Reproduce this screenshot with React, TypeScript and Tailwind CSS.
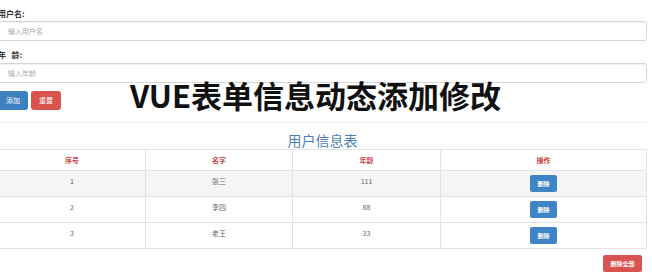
const users = [
  { id: 1, name: "张三", age: 111 },
  { id: 2, name: "李四", age: 88 },
  { id: 3, name: "老王", age: 33 },
];

export default function App() {
  return (
    <div className="relative h-[275px] w-[652px] overflow-hidden bg-white font-['Noto_Sans_CJK_SC',sans-serif] text-[#333]">
      <div className="ml-[-2px] w-[649px] pt-[9px]">
        <label className="block h-[9px] text-[8px] font-bold leading-[9px]">用户名:</label>
        <input
          className="mt-[3px] block h-[20px] w-full rounded-[3px] border border-[#d6d6d6] px-[9px] text-[7px] shadow-[inset_0_1px_1px_rgba(0,0,0,0.06)] outline-none placeholder:text-[#aaa]"
          placeholder="输入用户名"
        />
        <label className="mt-[9px] block h-[9px] text-[8px] font-bold leading-[9px]">年&nbsp;&nbsp;&nbsp;龄:</label>
        <input
          className="mt-[4px] block h-[20px] w-full rounded-[3px] border border-[#d6d6d6] px-[9px] text-[7px] shadow-[inset_0_1px_1px_rgba(0,0,0,0.06)] outline-none placeholder:text-[#aaa]"
          placeholder="输入年龄"
        />
        <div className="mt-[8px] flex gap-[3px]">
          <button className="h-[19px] w-[30px] rounded-[3px] bg-[#3e7fbf] text-[7px] text-white">添加</button>
          <button className="h-[19px] w-[30px] rounded-[3px] bg-[#d9534f] text-[7px] text-white">重置</button>
        </div>
        <div className="mt-[12px] border-t border-[#eee]" />
        <h3 className="mt-[8px] h-[18px] text-center text-[14px] leading-[18px] text-[#4c80b3]">用户信息表</h3>
        <table className="w-[648px] table-fixed border-collapse text-center text-[7px]">
          <colgroup>
            <col className="w-[147px]" />
            <col className="w-[147px]" />
            <col className="w-[148px]" />
            <col className="w-[206px]" />
          </colgroup>
          <thead>
            <tr className="h-[21px] text-[#c9413e]">
              <th className="border border-[#e3e3e3] font-bold">序号</th>
              <th className="border border-[#e3e3e3] font-bold">名字</th>
              <th className="border border-[#e3e3e3] font-bold">年龄</th>
              <th className="border border-[#e3e3e3] font-bold">操作</th>
            </tr>
          </thead>
          <tbody className="text-[#666]">
            {users.map((u, i) => (
              <tr key={u.id} className={i === 0 ? "h-[26px] bg-[#f5f5f5]" : "h-[26px]"}>
                <td className="border border-[#e3e3e3] align-top pt-[5px]">{u.id}</td>
                <td className="border border-[#e3e3e3] align-top pt-[5px]">{u.name}</td>
                <td className="border border-[#e3e3e3] align-top pt-[5px]">{u.age}</td>
                <td className="border border-[#e3e3e3]">
                  <button className="h-[17px] w-[27px] rounded-[2px] bg-[#3e84c6] text-[6px] font-bold text-white">删除</button>
                </td>
              </tr>
            ))}
          </tbody>
        </table>
        <div className="mt-[6px] flex justify-end pr-[5px]">
          <button className="h-[17px] w-[39px] rounded-[2px] bg-[#d9534f] text-[6px] font-bold text-white">删除全部</button>
        </div>
      </div>
      <div className="absolute left-[130px] top-[77px] whitespace-nowrap text-[31px] font-bold leading-[36px] text-[#111]">
        VUE表单信息动态添加修改
      </div>
    </div>
  );
}
